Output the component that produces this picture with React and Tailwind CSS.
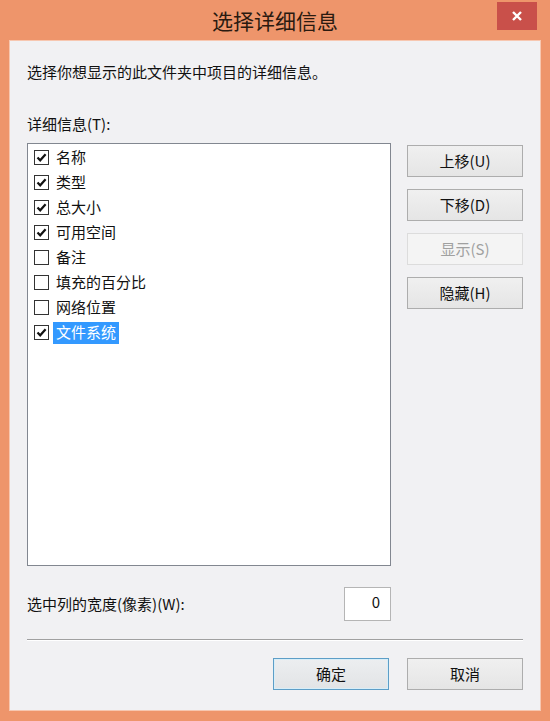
import React from "react";

const font = { fontFamily: '"Noto Sans CJK SC", "Liberation Sans", sans-serif' };

function Check({ checked }) {
  return (
    <span className="w-[15px] h-[15px] border border-[#333] bg-white flex items-center justify-center shrink-0">
      {checked && (
        <svg width="11" height="11" viewBox="0 0 11 11">
          <path d="M1.5 5.5 L4.2 8.3 L9.6 2.2" fill="none" stroke="#111" strokeWidth="2.2" />
        </svg>
      )}
    </span>
  );
}

function Btn({ children, disabled, def }) {
  return (
    <div
      className={
        "h-[32px] w-[116px] flex items-center justify-center text-[15px] border " +
        (disabled
          ? "border-[#dcdcdc] bg-[#f4f4f4] text-[#a0a0a0]"
          : def
          ? "border-[#5d9ec7] bg-gradient-to-b from-[#eceef0] to-[#e2e4e6] text-[#111] shadow-[inset_0_0_0_1px_#d8eef8]"
          : "border-[#adadad] bg-gradient-to-b from-[#f0f0f0] to-[#e5e5e5] text-[#111]")
      }
    >
      {children}
    </div>
  );
}

const items = [
  ["名称", true],
  ["类型", true],
  ["总大小", true],
  ["可用空间", true],
  ["备注", false],
  ["填充的百分比", false],
  ["网络位置", false],
  ["文件系统", true],
];

export default function App() {
  return (
    <div style={font} className="w-[550px] h-[721px] bg-[#ee956b] flex flex-col">
      <div className="h-[40px] flex items-start relative">
        <div className="flex-1 flex justify-center pt-[5px] text-[21px] text-[#2a1a10]">选择详细信息</div>
        <div className="absolute right-[13px] top-[2px] w-[40px] h-[28px] bg-[#c9504a] flex items-center justify-center">
          <svg width="12" height="12" viewBox="0 0 12 12">
            <path d="M2 2 L10 10 M10 2 L2 10" stroke="white" strokeWidth="2.4" />
          </svg>
        </div>
      </div>
      <div className="mx-[9px] mb-[10px] flex-1 bg-[#f1f1f3] border border-[#f7c7b0] flex flex-col px-[17px] text-[15px] text-[#111]">
        <div className="pt-[20px] h-[48px]">选择你想显示的此文件夹中项目的详细信息。</div>
        <div className="mt-[24px] h-[30px]">详细信息(T):</div>
        <div className="flex">
          <div className="w-[364px] h-[423px] bg-white border border-[#828790] pt-[1px] pl-[6px]">
            {items.map(([t, c], i) => (
              <div key={i} className="h-[25px] flex items-center">
                <Check checked={c} />
                <span
                  className={
                    "ml-[4px] px-[3px] h-[22px] flex items-center " +
                    (i === 7 ? "bg-[#3399ff] text-white" : "")
                  }
                >
                  {t}
                </span>
              </div>
            ))}
          </div>
          <div className="ml-[16px] pt-[2px] flex flex-col gap-[12px]">
            <Btn>上移(U)</Btn>
            <Btn>下移(D)</Btn>
            <Btn disabled>显示(S)</Btn>
            <Btn>隐藏(H)</Btn>
          </div>
        </div>
        <div className="mt-[21px] flex items-center">
          <div className="w-[317px]">选中列的宽度(像素)(W):</div>
          <div className="w-[47px] h-[34px] bg-white border border-[#b5b5b5] flex items-start justify-end pt-[3px] pr-[10px]">0</div>
        </div>
        <div className="mt-[18px] h-[2px] border-t border-[#a0a0a0] border-b border-b-white" />
        <div className="mt-[17px] flex justify-end gap-[18px]">
          <Btn def>确定</Btn>
          <Btn>取消</Btn>
        </div>
      </div>
    </div>
  );
}
